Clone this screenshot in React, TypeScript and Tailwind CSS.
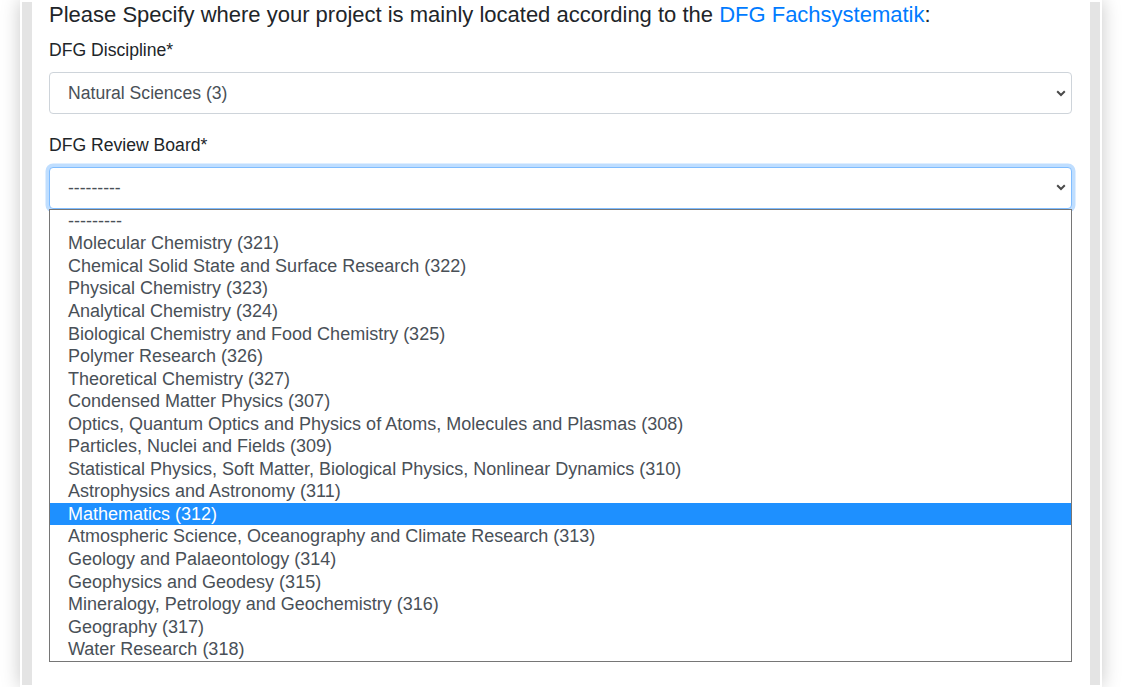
import React from 'react';

const boards = [
  '---------',
  'Molecular Chemistry (321)',
  'Chemical Solid State and Surface Research (322)',
  'Physical Chemistry (323)',
  'Analytical Chemistry (324)',
  'Biological Chemistry and Food Chemistry (325)',
  'Polymer Research (326)',
  'Theoretical Chemistry (327)',
  'Condensed Matter Physics (307)',
  'Optics, Quantum Optics and Physics of Atoms, Molecules and Plasmas (308)',
  'Particles, Nuclei and Fields (309)',
  'Statistical Physics, Soft Matter, Biological Physics, Nonlinear Dynamics (310)',
  'Astrophysics and Astronomy (311)',
  'Mathematics (312)',
  'Atmospheric Science, Oceanography and Climate Research (313)',
  'Geology and Palaeontology (314)',
  'Geophysics and Geodesy (315)',
  'Mineralogy, Petrology and Geochemistry (316)',
  'Geography (317)',
  'Water Research (318)',
];

const Chevron = () => (
  <svg width="10" height="7" viewBox="0 0 10 7" className="shrink-0">
    <path d="M1.2 1.3 L5 5 L8.8 1.3" fill="none" stroke="#4a4a4a" strokeWidth="2" />
  </svg>
);

const App = () => {
  const selected = 'Mathematics (312)';

  return (
    <div className="min-h-screen bg-white overflow-hidden font-['Liberation_Sans',Arial,sans-serif]">
      <div className="ml-[20px] w-[1082px] min-h-[687px] bg-white p-[2px] shadow-[0_0_18px_rgba(0,0,0,0.22)] flex">
        <div className="flex-1 border-x-[10px] border-[#e4e4e4] bg-white pl-[17px] pr-[18px]">
          <h5 className="text-[22px] leading-[26.4px] text-[#212529] mb-[8.8px]">
            Please Specify where your project is mainly located according to the{' '}
            <a href="#" className="text-[#007bff]">DFG Fachsystematik</a>:
          </h5>

          {/* discipline */}
          <div className="mb-[17.6px]">
            <label className="block text-[17.6px] leading-[26.4px] text-[#212529] mb-[8.8px]">DFG Discipline*</label>
            <div className="h-[41.8px] border border-[#ced4da] rounded-[4px] flex items-center justify-between pl-[18px] pr-[5px] text-[17.6px] text-[#495057]">
              <span>Natural Sciences (3)</span>
              <Chevron />
            </div>
          </div>

          {/* review board */}
          <div>
            <label className="block text-[17.6px] leading-[26.4px] text-[#212529] mb-[8.8px]">DFG Review Board*</label>
            <div className="relative">
              <div className="h-[41.8px] border border-[#80bdff] rounded-[4px] shadow-[0_0_0_3.5px_rgba(0,123,255,0.25)] flex items-center justify-between pl-[18px] pr-[5px] text-[17.6px] text-[#495057] bg-white">
                <span>---------</span>
                <Chevron />
              </div>
              <div className="absolute left-0 right-0 top-[41.8px] border border-[#767676] bg-white z-10">
                {boards.map(b => (
                  <div
                    key={b}
                    className={`h-[22.55px] leading-[22.55px] pl-[18px] text-[18px] whitespace-nowrap ${b === selected ? 'bg-[#1e90ff] text-white' : 'text-[#495057]'}`}
                  >
                    {b}
                  </div>
                ))}
              </div>
            </div>
          </div>
        </div>
      </div>
    </div>
  );
};

export default App;
